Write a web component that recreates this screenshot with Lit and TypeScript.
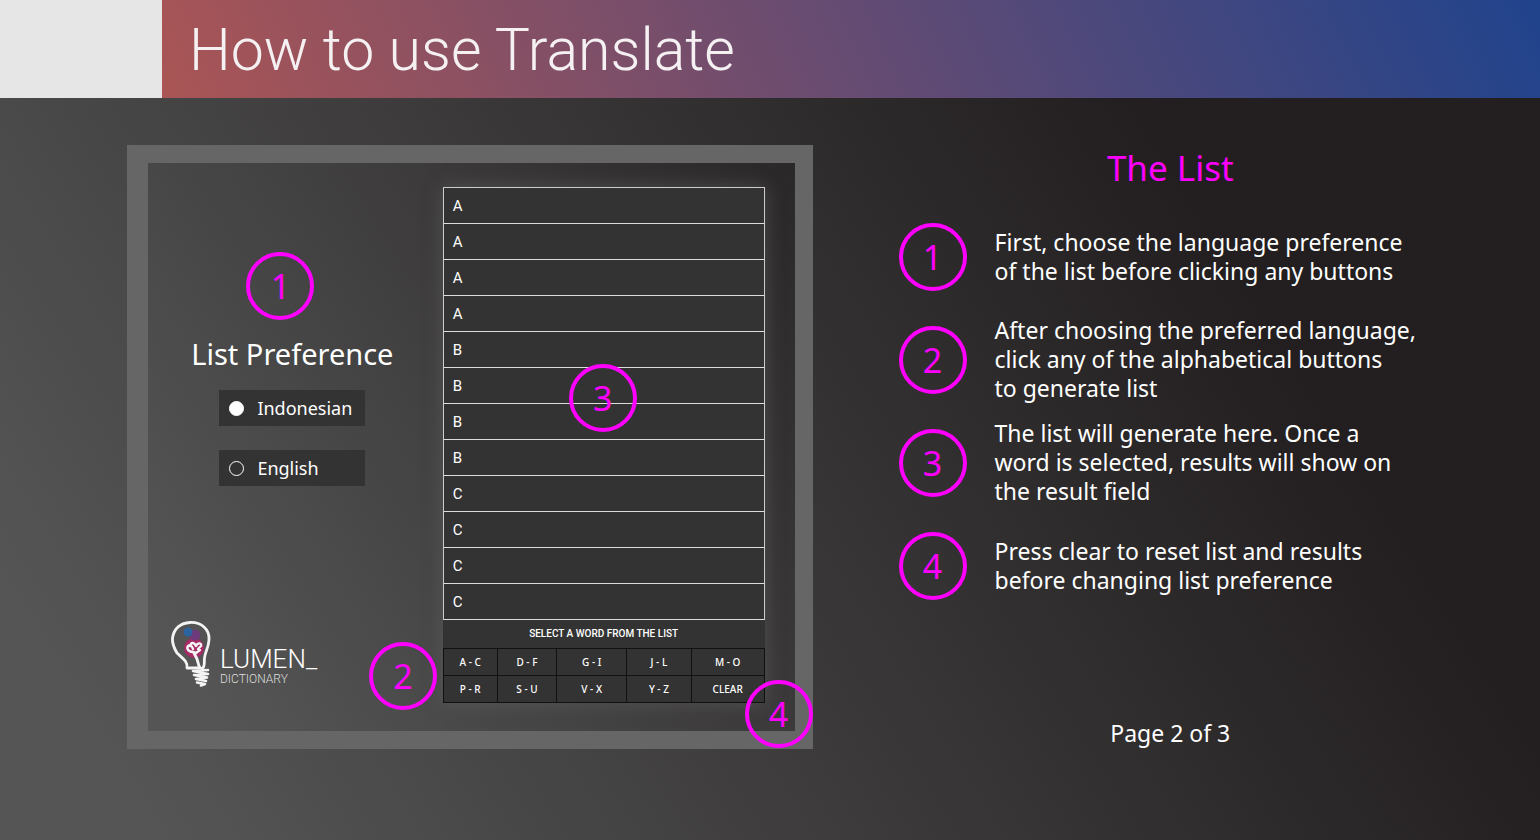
import { LitElement, html, css, svg } from "lit";
import { customElement, state } from "lit/decorators.js";

const WORDS = ["A", "A", "A", "A", "B", "B", "B", "B", "C", "C", "C", "C"];
const RANGES = ["A - C", "D - F", "G - I", "J - L", "M - O", "P - R", "S - U", "V - X", "Y - Z", "CLEAR"];
const LANGUAGES = ["Indonesian", "English"];
const STEPS = [
  ["First, choose the language preference", "of the list before clicking any buttons"],
  ["After choosing the preferred language,", "click any of the alphabetical buttons", "to generate list"],
  ["The list will generate here. Once a", "word is selected, results will show on", "the result field"],
  ["Press clear to reset list and results", "before changing list preference"],
];

const bulb = svg`
  <circle cx="29" cy="33" r="10" fill="#a62a66"/>
  <circle cx="30" cy="20" r="5.5" fill="#6e3a7c"/>
  <circle cx="23" cy="17" r="4.5" fill="#2b62a0"/>
  <g fill="none" stroke="#f4f4f4" stroke-linecap="round" stroke-linejoin="round">
    <path stroke-width="2.8" d="M34 53L22 53C23 46 17 43 12 38C9 33 7 29 7.5 23C9 13 16 8 25 7.5C36 7 45 14 44 25C43.5 33 40 37 39.5 43C39 48 40 51 38 53C36 54 35 53 34 51L32 44L29 38"/>
    <path stroke-width="2.4" d="M28 37C24 37 21 34 23 31C25 29 27 31 28 34M25 31C26 27 29 27 31 31C33 27 37 28 36 31L33 34L35 35L31 38L28 37"/>
    <path stroke-width="2.6" d="M28 56L43 55M28 56L43 59L29 60L42 62.5L31 64L41 66M32 67.5L40 69L36 70.5"/>
  </g>`;

@customElement("app-root")
export class AppRoot extends LitElement {
  @state() private language = "Indonesian";

  static styles = css`
    :host { display: block; min-height: 100vh; box-sizing: border-box; color: #fff;
      font-family: "Noto Sans", "Open Sans", sans-serif;
      background: linear-gradient(58deg, #555 8%, #231f20 77%); }
    * { box-sizing: border-box; }
    h1, h2, p, ol, ul, fieldset, legend { margin: 0; padding: 0; border: 0; font-weight: 400; list-style: none; }
    .banner { height: 98px; display: flex; align-items: center; background: #e6e6e6; padding-left: 162px; }
    .banner h1 { flex: 1; height: 98px; padding-left: 27px; white-space: nowrap;
      font: 300 59px/100px Roboto, sans-serif; color: #f5f1f2;
      background: linear-gradient(65deg, #aa5555, #6b4c70 46%, #20438c); }
    .content { display: grid; grid-template-columns: 686fr 515fr; column-gap: 86px; padding: 47px 124px 40px 127px; }
    .device { position: relative; display: grid; grid-template-columns: 295fr 322fr; padding: 24px 30px 28px 0;
      border: 18px solid #666; border-left-width: 21px; background: linear-gradient(58deg, #555 8%, #2b2829); }
    .side { display: flex; flex-direction: column; align-items: center; padding: 65px 14px 0 8px; }
    .marker { flex: none; width: 68px; height: 68px; border: 4px solid #f0f; border-radius: 50%; color: #f0f;
      display: flex; align-items: center; justify-content: center; font-size: 34px; line-height: 34px; }
    .side .marker { margin-right: 24px; }
    .over { position: absolute; }
    .on-list { left: 62%; top: 201px; transform: translateX(20px); }
    .on-keys { left: 221px; bottom: 21px; }
    .on-clear { right: -18px; bottom: -17px; }
    .languages { display: flex; flex-direction: column; align-items: center; gap: 24px; margin-top: 14px; }
    legend { font-size: 29px; line-height: 40px; padding-bottom: 16px; }
    .language { width: 146px; height: 36px; padding-left: 10px; display: flex; align-items: center; gap: 13px;
      background: #333; font-size: 18px; cursor: pointer; }
    .language input { appearance: none; width: 15px; height: 15px; margin: 0; border: 1px solid #fff; border-radius: 50%; }
    .language input:checked { background: #fff; }
    .logo { display: flex; margin-top: auto; align-self: flex-start; padding: 0 0 12px 9px; }
    .logo svg { width: 52px; height: 76px; }
    .name { padding: 30px 0 0 3px; font: 300 26px/28px Roboto, sans-serif; }
    .name small { display: block; font-size: 12px; line-height: 12px; color: #ddd; }
    .picker { background: #333; box-shadow: 0 0 16px #6668; }
    .words { border: 1px solid #ccc; border-bottom: 0; }
    .words button { display: block; width: 100%; height: 36px; border: 0; border-bottom: 1px solid #ddd; padding: 0 9px;
      text-align: left; background: none; color: #fff; font: 15px/34px Roboto, sans-serif; }
    .hint { text-align: center; font: 500 10px/28px Roboto, sans-serif; }
    .keys { display: grid; grid-template-columns: 54fr 60fr 70fr 65fr 73fr; border: 1px solid #111; border-width: 1px 0 0 1px; }
    .keys button { height: 27px; border: 1px solid #111; border-width: 0 1px 1px 0; background: #333; color: #fff; padding: 0;
      font: 500 10px/26px "Noto Sans", sans-serif; }
    .guide { display: flex; flex-direction: column; }
    .guide h2 { color: #f0f; text-align: center; font-size: 35px; line-height: 46px; padding-left: 26px; }
    .steps { display: grid; gap: 16px; margin-top: 22px; }
    .step { display: flex; align-items: center; gap: 28px; min-height: 87px; font-size: 23px; line-height: 29px; }
    .step span { display: block; white-space: nowrap; }
    .page { margin-top: auto; text-align: center; font-size: 23px; line-height: 32px; padding-left: 26px; }
  `;

  render() {
    return html`
      <header class="banner"><h1>How to use Translate</h1></header>
      <main class="content">
        <section class="device">
          <div class="side">
            <div class="marker">1</div>
            <fieldset class="languages">
              <legend>List Preference</legend>
              ${LANGUAGES.map((name) => html`<label class="language">
                <input type="radio" name="language" .checked=${this.language === name} @change=${() => (this.language = name)} />
                ${name}</label>`)}
            </fieldset>
            <div class="logo"><svg viewBox="0 0 52 76" aria-hidden="true">${bulb}</svg>
              <div class="name">LUMEN_<small>DICTIONARY</small></div></div>
          </div>
          <div class="picker">
            <ul class="words">${WORDS.map((w) => html`<li><button>${w}</button></li>`)}</ul>
            <p class="hint">SELECT A WORD FROM THE LIST</p>
            <div class="keys">${RANGES.map((r) => html`<button>${r}</button>`)}</div>
          </div>
          <div class="marker over on-keys">2</div>
          <div class="marker over on-list">3</div>
          <div class="marker over on-clear">4</div>
        </section>
        <section class="guide">
          <h2>The List</h2>
          <ol class="steps">${STEPS.map((lines, i) => html`<li class="step">
            <div class="marker">${i + 1}</div><p>${lines.map((l) => html`<span>${l}</span>`)}</p></li>`)}</ol>
          <p class="page">Page 2 of 3</p>
        </section>
      </main>`;
  }
}
